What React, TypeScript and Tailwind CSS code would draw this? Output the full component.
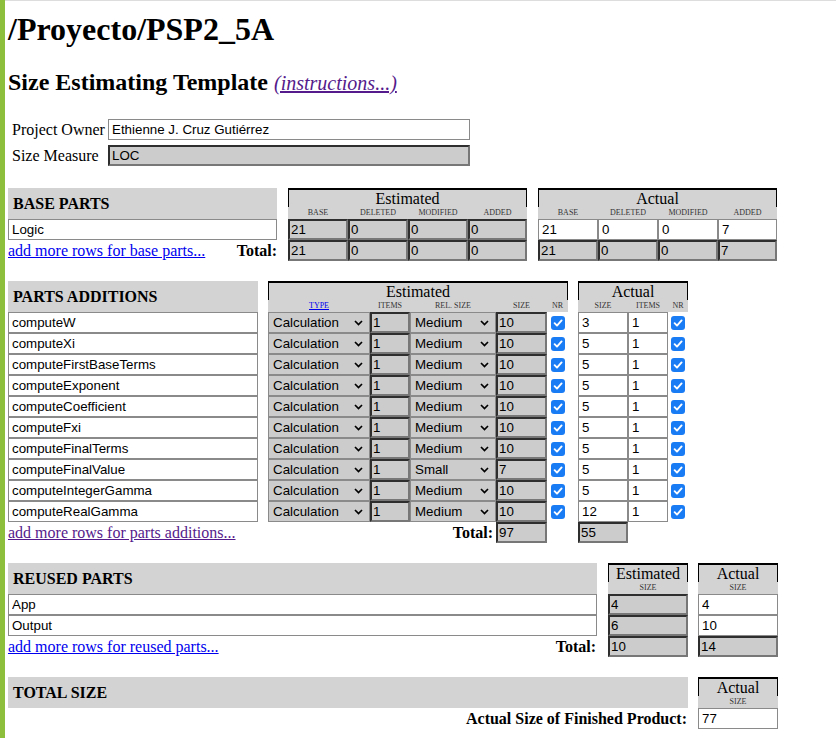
import React from "react";

const serif = "font-['Liberation_Serif','Times_New_Roman',serif]";
const sans = "font-['Liberation_Sans',Arial,sans-serif]";

const whiteBox =
  "block h-[21px] border border-[#8a8a8a] bg-white px-[3px] text-[13.33px] text-black outline-none font-['Liberation_Sans',Arial,sans-serif]";
const grayBox =
  "block h-[21px] border-2 border-t-[#2e2e2e] border-l-[#2e2e2e] border-r-[#777777] border-b-[#777777] bg-[#cccccc] px-[1px] text-[13.33px] text-black outline-none font-['Liberation_Sans',Arial,sans-serif]";

type Col = { label: string; w: string; link?: boolean };

function GroupHead({ title, cols, width }: { title: string; cols: Col[]; width: string }) {
  return (
    <div className={`${width} shrink-0 bg-[#d3d3d3] ${serif}`}>
      <div className="h-[19px] border-x border-t-2 border-black text-center text-[16px] leading-[17px]">
        {title}
      </div>
      <div className="flex h-[12px]">
        {cols.map((c, i) => (
          <div
            key={i}
            className={`${c.w} shrink-0 text-center text-[8px] leading-[11px] uppercase ${
              c.link ? "text-[#0000ee] underline" : "text-[#333]"
            }`}
          >
            {c.label}
          </div>
        ))}
      </div>
    </div>
  );
}

function SectionTitle({ label, width }: { label: string; width: string }) {
  return (
    <div className={`${width} shrink-0 h-[31px] bg-[#d3d3d3] pl-[5px] flex items-center text-[16px] font-bold ${serif}`}>
      {label}
    </div>
  );
}

function Check() {
  return (
    <span className="flex h-[14px] w-[14px] items-center justify-center rounded-[3px] bg-[#1a7cf5]">
      <svg width="10" height="10" viewBox="0 0 10 10">
        <path d="M1.6 5.2 L4 7.6 L8.6 2.4" stroke="white" strokeWidth="1.9" fill="none" strokeLinecap="round" strokeLinejoin="round" />
      </svg>
    </span>
  );
}

function FakeSelect({ value, width }: { value: string; width: string }) {
  return (
    <div className={`relative ${width} shrink-0 h-[21px] border border-[#8a8a8a] bg-[#cccccc] pl-[4px] text-[13.33px] leading-[19px] ${sans}`}>
      {value}
      <svg className="absolute right-[6px] top-[7px]" width="9" height="6" viewBox="0 0 9 6">
        <path d="M1 1 L4.5 4.5 L8 1" stroke="black" strokeWidth="1.7" fill="none" />
      </svg>
    </div>
  );
}

const parts: [string, string, number, number][] = [
  ["computeW", "Medium", 10, 3],
  ["computeXi", "Medium", 10, 5],
  ["computeFirstBaseTerms", "Medium", 10, 5],
  ["computeExponent", "Medium", 10, 5],
  ["computeCoefficient", "Medium", 10, 5],
  ["computeFxi", "Medium", 10, 5],
  ["computeFinalTerms", "Medium", 10, 5],
  ["computeFinalValue", "Small", 7, 5],
  ["computeIntegerGamma", "Medium", 10, 5],
  ["computeRealGamma", "Medium", 10, 12],
];

export default function App() {
  const baseCols: Col[] = [
    { label: "Base", w: "w-[60px]" },
    { label: "Deleted", w: "w-[60px]" },
    { label: "Modified", w: "w-[60px]" },
    { label: "Added", w: "w-[59px]" },
  ];

  return (
    <div className={`flex min-h-[738px] bg-white text-black ${serif}`}>
      <div className="w-[5px] shrink-0 bg-[#8dbf3c]" />
      <div className="flex-1 border-t border-[#dddddd] pl-[3px]">
        <h1 className="mt-[10px] text-[32px] font-bold leading-[37px]">/Proyecto/PSP2_5A</h1>
        <h2 className="mt-[20px] text-[24px] font-bold leading-[28px]">
          Size Estimating Template{" "}
          <a className="text-[20px] font-normal italic text-[#551a8b] underline">(instructions...)</a>
        </h2>

        {/* owner */}
        <div className="mt-[22px] flex flex-col gap-[5px] text-[16px] leading-[21px]">
          <div className="flex items-center">
            <span className="w-[100px] pl-[4px]">Project Owner</span>
            <input readOnly value="Ethienne J. Cruz Gutiérrez" className={`${whiteBox} w-[362px]`} />
          </div>
          <div className="flex items-center">
            <span className="w-[100px] pl-[4px]">Size Measure</span>
            <input readOnly value="LOC" className={`${grayBox} w-[362px] pl-[2px]`} />
          </div>
        </div>

        {/* base parts */}
        <div className="mt-[22px] flex flex-col">
          <div className="flex">
            <SectionTitle label="BASE PARTS" width="w-[269px]" />
            <div className="ml-[11px]"><GroupHead title="Estimated" cols={baseCols} width="w-[239px]" /></div>
            <div className="ml-[11px]"><GroupHead title="Actual" cols={baseCols} width="w-[239px]" /></div>
          </div>
          <div className="flex">
            <input readOnly value="Logic" className={`${whiteBox} w-[269px]`} />
            <div className="ml-[11px] flex">
              {["21", "0", "0", "0"].map((v, i) => (
                <input key={i} readOnly value={v} className={`${grayBox} ${i === 3 ? "w-[59px]" : "w-[60px]"}`} />
              ))}
            </div>
            <div className="ml-[11px] flex">
              {["21", "0", "0", "7"].map((v, i) => (
                <input key={i} readOnly value={v} className={`${whiteBox} ${i === 3 ? "w-[59px]" : "w-[60px]"}`} />
              ))}
            </div>
          </div>
          <div className="flex">
            <div className="flex w-[269px] items-center justify-between text-[16px] leading-[21px]">
              <a className="text-[#0000ee] underline">add more rows for base parts...</a>
              <b>Total:</b>
            </div>
            <div className="ml-[11px] flex">
              {["21", "0", "0", "0"].map((v, i) => (
                <input key={i} readOnly value={v} className={`${grayBox} ${i === 3 ? "w-[59px]" : "w-[60px]"}`} />
              ))}
            </div>
            <div className="ml-[11px] flex">
              {["21", "0", "0", "7"].map((v, i) => (
                <input key={i} readOnly value={v} className={`${grayBox} ${i === 3 ? "w-[59px]" : "w-[60px]"}`} />
              ))}
            </div>
          </div>
        </div>

        {/* parts additions */}
        <div className="mt-[20px] flex flex-col">
          <div className="flex">
            <SectionTitle label="PARTS ADDITIONS" width="w-[250px]" />
            <div className="ml-[10px]">
              <GroupHead
                title="Estimated"
                width="w-[300px]"
                cols={[
                  { label: "Type", w: "w-[102px]", link: true },
                  { label: "Items", w: "w-[40px]" },
                  { label: "Rel. Size", w: "w-[86px]" },
                  { label: "Size", w: "w-[51px]" },
                  { label: "NR", w: "w-[21px]" },
                ]}
              />
            </div>
            <div className="ml-[10px]">
              <GroupHead
                title="Actual"
                width="w-[110px]"
                cols={[
                  { label: "Size", w: "w-[50px]" },
                  { label: "Items", w: "w-[40px]" },
                  { label: "NR", w: "w-[20px]" },
                ]}
              />
            </div>
          </div>
          {parts.map(([name, rel, est, act]) => (
            <div key={name} className="flex">
              <input readOnly value={name} className={`${whiteBox} w-[250px]`} />
              <div className="ml-[10px] flex w-[300px]">
                <FakeSelect value="Calculation" width="w-[102px]" />
                <input readOnly value="1" className={`${grayBox} w-[40px]`} />
                <FakeSelect value={rel} width="w-[86px]" />
                <input readOnly value={String(est)} className={`${grayBox} w-[51px]`} />
                <div className="flex w-[21px] items-center justify-center">
                  <Check />
                </div>
              </div>
              <div className="ml-[10px] flex w-[110px]">
                <input readOnly value={String(act)} className={`${whiteBox} w-[50px]`} />
                <input readOnly value="1" className={`${whiteBox} w-[40px]`} />
                <div className="flex w-[20px] items-center justify-center">
                  <Check />
                </div>
              </div>
            </div>
          ))}
          <div className="flex">
            <div className="w-[250px] text-[16px] leading-[21px]">
              <a className="text-[#551a8b] underline">add more rows for parts additions...</a>
            </div>
            <div className="ml-[10px] flex w-[300px]">
              <div className="w-[228px] pr-[3px] text-right text-[16px] font-bold leading-[21px]">Total:</div>
              <input readOnly value="97" className={`${grayBox} w-[51px]`} />
            </div>
            <div className="ml-[10px] flex w-[110px]">
              <input readOnly value="55" className={`${grayBox} w-[50px]`} />
            </div>
          </div>
        </div>

        {/* reused parts */}
        <div className="mt-[20px] flex flex-col">
          <div className="flex">
            <SectionTitle label="REUSED PARTS" width="w-[589px]" />
            <div className="ml-[11px]">
              <GroupHead title="Estimated" width="w-[80px]" cols={[{ label: "Size", w: "w-[80px]" }]} />
            </div>
            <div className="ml-[10px]">
              <GroupHead title="Actual" width="w-[80px]" cols={[{ label: "Size", w: "w-[80px]" }]} />
            </div>
          </div>
          {[
            ["App", "4", "4"],
            ["Output", "6", "10"],
          ].map(([n, e, a]) => (
            <div key={n} className="flex">
              <input readOnly value={n} className={`${whiteBox} w-[589px]`} />
              <input readOnly value={e} className={`${grayBox} ml-[11px] w-[80px]`} />
              <input readOnly value={a} className={`${whiteBox} ml-[10px] w-[80px]`} />
            </div>
          ))}
          <div className="flex">
            <div className="flex w-[589px] items-center justify-between text-[16px] leading-[21px]">
              <a className="text-[#0000ee] underline">add more rows for reused parts...</a>
              <b className="pr-[1px]">Total:</b>
            </div>
            <input readOnly value="10" className={`${grayBox} ml-[11px] w-[80px]`} />
            <input readOnly value="14" className={`${grayBox} ml-[10px] w-[80px]`} />
          </div>
        </div>

        {/* total size */}
        <div className="mt-[20px] flex flex-col">
          <div className="flex">
            <SectionTitle label="TOTAL SIZE" width="w-[680px]" />
            <div className="ml-[10px]">
              <GroupHead title="Actual" width="w-[80px]" cols={[{ label: "Size", w: "w-[80px]" }]} />
            </div>
          </div>
          <div className="flex">
            <div className="w-[680px] pr-[1px] text-right text-[16px] font-bold leading-[21px]">
              Actual Size of Finished Product:
            </div>
            <input readOnly value="77" className={`${whiteBox} ml-[10px] w-[80px]`} />
          </div>
        </div>
      </div>
    </div>
  );
}
